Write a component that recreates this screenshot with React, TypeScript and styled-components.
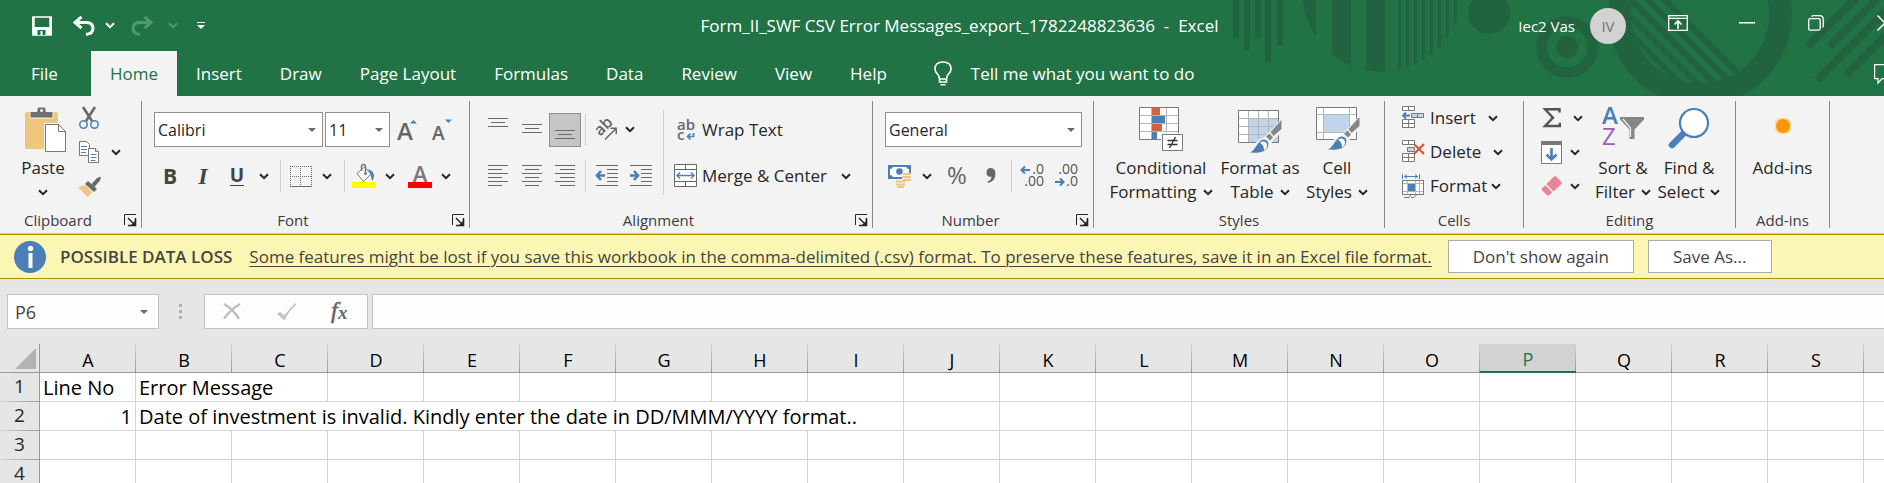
import React from 'react';
import styled, { createGlobalStyle, css } from 'styled-components';

const GREEN = '#217346';
const DECOR = '#22633f';
const BLUE = '#4a7fb8';
const GREY = '#797979';
const TAN = '#eec67d';

const GlobalStyle = createGlobalStyle`
  * { box-sizing: border-box; }
  body {
    margin: 0;
    overflow: hidden;
    background: #e6e6e6;
    font-family: "Open Sans", "Noto Sans", sans-serif;
    font-size: 17px;
    line-height: 24px;
    color: #262626;
  }
  button, select, input {
    font: inherit;
    color: inherit;
    margin: 0;
    padding: 0;
    border: 0;
    background: none;
    border-radius: 0;
  }
  svg { display: block; flex: none; overflow: visible; }
`;

/* ---------- frame ---------- */

const Window = styled.div`
  display: flex;
  flex-direction: column;
  height: 100vh;
  overflow: hidden;
`;

const Header = styled.header`
  position: relative;
  flex: none;
  margin-right: -35px;
  background: ${GREEN};
  color: #fff;
`;

const Decoration = styled.svg`
  position: absolute;
  top: 0;
  right: 0;
  overflow: hidden;
`;

const TitleBar = styled.div`
  position: relative;
  display: grid;
  grid-template-columns: 1fr auto 1fr;
  align-items: center;
  height: 51px;
`;

const QuickAccess = styled.div`
  display: flex;
  align-items: center;
  padding-left: 24px;
`;

const Title = styled.h1`
  margin: 0;
  font-size: 17px;
  font-weight: 400;
  line-height: 24px;
  white-space: pre;
`;

const WindowTools = styled.div`
  display: flex;
  align-self: stretch;
  align-items: center;
  justify-content: flex-end;
  > button { align-self: flex-start; }
`;

const UserName = styled.span`
  font-size: 15px;
`;

const Avatar = styled.span`
  width: 36px;
  margin: 0 17px 0 15px;
  border-radius: 50%;
  background: #d2d2d2;
  color: #6b7480;
  font-size: 15px;
  line-height: 36px;
  text-align: center;
`;

const ToolButton = styled.button<{ $w: number; $h?: number }>`
  display: flex;
  align-items: center;
  justify-content: center;
  flex: none;
  width: ${p => p.$w}px;
  height: ${p => p.$h ?? 32}px;
`;

const Tabs = styled.nav`
  position: relative;
  display: flex;
  height: 45px;
  padding-left: 12px;
`;

const Tab = styled.button<{ $active?: boolean }>`
  padding: 0 19px;
  ${p => p.$active && css`
    margin-left: 14px;
    background: #f3f3f3;
    color: ${GREEN};
  `}
`;

const TellMe = styled.button`
  display: flex;
  align-items: center;
  gap: 19px;
  margin-left: 28px;
`;

const CommentButton = styled.button`
  margin-left: auto;
  padding-right: 23px;
`;

/* ---------- ribbon ---------- */

const Ribbon = styled.div`
  display: flex;
  flex: none;
  height: 138px;
  padding: 5px 0;
  background: #f3f3f3;
  border-bottom: 1px solid #c6c6c6;
`;

const Group = styled.section<{ $w: number }>`
  display: flex;
  flex-direction: column;
  justify-content: space-between;
  flex: none;
  width: ${p => p.$w}px;
  border-right: 1px solid #8a8a8a;
`;

const GroupBody = styled.div<{ $left: number }>`
  display: flex;
  padding-left: ${p => p.$left}px;
`;

const GroupFooter = styled.div`
  display: flex;
  align-items: center;
  height: 16px;
  color: #3b3b3b;
`;

const GroupName = styled.span`
  flex: 1;
  font-size: 15px;
  text-align: center;
`;

const Launcher = styled.button`
  padding: 0 5px 0 8px;
`;

const Rows = styled.div`
  display: flex;
  flex-direction: column;
`;

const TwoRows = styled(Rows)`
  gap: 13px;
  padding-top: 11px;
`;

const Row = styled.div<{ $h: number; $gap?: number }>`
  display: flex;
  align-items: center;
  height: ${p => p.$h}px;
  gap: ${p => p.$gap ?? 0}px;
`;

const Separator = styled.span<{ $w?: number }>`
  flex: none;
  width: ${p => p.$w ?? 12}px;
  height: 32px;
  background: linear-gradient(#cfcfcf, #cfcfcf) center / 1px 100% no-repeat;
`;

const TallSeparator = styled.span`
  flex: none;
  width: 1px;
  height: 85px;
  margin: 9px 9px 0 6px;
  background: #cfcfcf;
`;

const Combo = styled.label<{ $w: number }>`
  display: grid;
  align-items: center;
  width: ${p => p.$w}px;
  height: 35px;
  background: #fff;
  border: 1px solid #8f8f8f;
  > * { grid-area: 1 / 1; }
  > svg { justify-self: end; margin-right: 6px; pointer-events: none; }
`;

const ComboSelect = styled.select`
  appearance: none;
  width: 100%;
  height: 33px;
  padding-left: 3px;
  font-size: 16px;
  outline: none;
`;

const BigButton = styled.button<{ $w: number }>`
  display: flex;
  flex-direction: column;
  align-items: center;
  flex: none;
  width: ${p => p.$w}px;
  white-space: nowrap;
`;

const BigIcon = styled.span`
  display: flex;
  height: 55px;
`;

const BigLine = styled.span`
  display: flex;
  align-items: center;
  gap: 6px;
  height: 24px;
`;

const LabelButton = styled.button<{ $chevronGap?: number }>`
  display: flex;
  align-items: center;
  height: 32px;
  white-space: nowrap;
  > span { margin: 0 ${p => p.$chevronGap ?? 0}px 0 5px; }
`;

const PressedButton = styled(ToolButton)`
  background: #c5c5c5;
  border: 1px solid #8f8f8f;
`;

const Glyph = styled.span<{ $kind: 'bold' | 'italic' | 'underline' }>`
  color: #444;
  font-size: 21px;
  font-weight: 700;
  ${p => p.$kind === 'italic' && css`
    font-family: "Liberation Serif", serif;
    font-size: 24px;
    font-style: italic;
  `}
  ${p => p.$kind === 'underline' && css`
    font-size: 19px;
    line-height: 19px;
    border-bottom: 1px solid #444;
  `}
`;

/* ---------- message bar ---------- */

const MessageBar = styled.div`
  display: flex;
  align-items: center;
  flex: none;
  height: 45px;
  padding-left: 14px;
  background: #fcf6b5;
  border-top: 1px solid #b38a06;
  border-bottom: 1px solid #b38a06;
  color: #444;
  white-space: nowrap;
`;

const MessageTitle = styled.strong`
  margin: 0 17px 0 14px;
  font-weight: 600;
`;

const MessageLink = styled.a`
  color: inherit;
  text-decoration: underline;
  text-underline-offset: 3px;
  text-decoration-thickness: 1px;
`;

const MessageButton = styled.button`
  height: 33px;
  margin-left: 14px;
  padding: 0 24px;
  background: #fff;
  border: 1px solid #ababab;
  ${MessageLink} + & { margin-left: 16px; }
`;

/* ---------- formula bar ---------- */

const FormulaBar = styled.div`
  display: flex;
  flex: none;
  height: 65px;
  padding: 15px 0 15px 7px;
`;

const NameBox = styled.label`
  display: flex;
  align-items: center;
  width: 152px;
  padding: 0 10px 0 7px;
  background: #fdfdfd;
  border: 1px solid #c3c3c3;
`;

const NameInput = styled.input`
  flex: 1;
  min-width: 0;
  font-size: 18px;
  color: #444;
  outline: none;
`;

const Grip = styled.span`
  display: flex;
  flex-direction: column;
  justify-content: center;
  gap: 3px;
  width: 45px;
  padding-left: 20px;
  > i { width: 3px; height: 3px; background: #b0b0b0; }
`;

const FormulaTools = styled.div`
  display: flex;
  align-items: center;
  width: 164px;
  margin-right: 4px;
  padding-left: 3px;
  background: #fdfdfd;
  border: 1px solid #c3c3c3;
`;

const FormulaInput = styled.input`
  flex: 1;
  min-width: 0;
  padding: 0 8px;
  background: #fdfdfd;
  border: 1px solid #c3c3c3;
  border-right: 0;
  outline: none;
`;

/* ---------- sheet ---------- */

const SheetArea = styled.main`
  flex: 1;
  min-height: 0;
  overflow: hidden;
`;

const Sheet = styled.table`
  table-layout: fixed;
  width: 1960px;
  border-collapse: separate;
  border-spacing: 0;
  color: #000;
`;

const SelectAll = styled.th`
  height: 29px;
  padding: 0 3px 3px 0;
  border-right: 1px solid #999;
  border-bottom: 1px solid #999;
  vertical-align: bottom;
  > svg { margin-left: auto; }
`;

const ColumnHead = styled.th<{ $selected?: boolean }>`
  height: 29px;
  padding: 3px 0 0;
  border-bottom: 1px solid #999;
  background: linear-gradient(#d4d4d4, #999) right / 1px 100% no-repeat #e6e6e6;
  font-size: 18px;
  font-weight: 400;
  line-height: 24px;
  ${p => p.$selected && css`
    border-bottom: 2px solid ${GREEN};
    background-color: #d2d2d2;
    color: ${GREEN};
  `}
`;

const RowHead = styled.th`
  height: 29px;
  padding: 0 0 2px;
  border-right: 1px solid #999;
  background: linear-gradient(90deg, #d4d4d4, #999) bottom / 100% 1px no-repeat #e6e6e6;
  font-size: 19px;
  font-weight: 400;
  line-height: 27px;
  color: #262626;
`;

const Cell = styled.td<{ $right?: boolean }>`
  height: 29px;
  padding: 2px 3px 0;
  background: #fff;
  border-right: 1px solid #d4d4d4;
  border-bottom: 1px solid #d4d4d4;
  font-size: 20px;
  line-height: 26px;
  text-align: ${p => (p.$right ? 'right' : 'left')};
  white-space: nowrap;
`;

/* ---------- icons ---------- */

const Chevron = ({ color = '#262626' }: { color?: string }) => (
  <svg width="10" height="7" viewBox="0 0 10 7" fill="none" stroke={color} strokeWidth="2">
    <path d="M1 1.2 5 5.2 9 1.2" />
  </svg>
);

const Caret = () => (
  <svg width="8" height="4" viewBox="0 0 8 4" fill="#6a6a6a"><path d="M0 0h8L4 4z" /></svg>
);

const LauncherIcon = () => (
  <svg width="12" height="12" viewBox="0 0 12 12" fill="none" stroke="#262626">
    <path d="M.5 11V.5H12" />
    <path d="M4 4l6 6" strokeWidth="1.5" />
    <path d="M11.5 4v7.5H4" strokeWidth="1.6" />
    <path d="M6.500 11.500h5v-5z" fill="#262626" stroke="none" />
  </svg>
);

const lines = (rows: [number, number, number][]) => rows.map(([x1, x2, y]) => `M${x1} ${y}.5H${x2}`).join('');
const LinesIcon = ({ rows, h }: { rows: [number, number, number][]; h: number }) => (
  <svg width="20" height={h} viewBox={`0 0 20 ${h}`} stroke="#6a6a6a" fill="none"><path d={lines(rows)} /></svg>
);

const IndentIcon = ({ right }: { right?: boolean }) => (
  <svg width="22" height="22" viewBox="0 0 22 22" fill="none">
    <path d={lines([[0, 22, 0], [11, 22, 4], [11, 22, 8], [11, 22, 12], [11, 22, 16], [0, 22, 20]])} stroke="#6a6a6a" />
    <g transform={right ? 'matrix(-1 0 0 1 9 0)' : undefined}>
      <path d="M0 10.500h9M5 6l-4 4.500 4 4.500" stroke={BLUE} strokeWidth="2.600" />
    </g>
  </svg>
);

const Brush = ({ x, y }: { x: number; y: number }) => (
  <g transform={`translate(${x} ${y})`}>
    <path d="M33 1 34 9 24 19 21 23 17 22 11 31 0 33 11 21 16 19Z" fill="#f3f3f3" stroke="#f3f3f3" strokeWidth="3" />
    <path d="M33 0V9L25 16 22 12z" fill="#868686" />
    <path d="M21 13.500l3.500 4-3 3-4-4z" fill="#868686" />
    <path d="M10 23c3-5 8-4 9.500-1 1.500 5-2 10-9.500 10.500-4 .5-6 0-9 0 5-2 6-6 9-9.500z" fill={BLUE} />
    <path d="M11.500 22.500c3-2 7-1 7 3 0 2-1 4-3 5 0-4-1-5.500-4-8z" fill="#fff" />
  </g>
);

const PasteIcon = () => (
  <svg width="42" height="46" viewBox="0 0 42 46">
    <rect x="0" y="5" width="33" height="37" rx="2" fill={TAN} />
    <path d="M5 4.500h7V2q0-2 2-2h5q2 0 2 2v2.500h7V11H5z" fill="#6f6f6f" stroke="#f3f3f3" />
    <circle cx="16.500" cy="3.500" r="1.500" fill="#f3f3f3" />
    <path d="M19 16h16l7 8v22H19z" fill="#f3f3f3" />
    <path d="M20.500 17.500h13l7 7v20h-20z" fill="#fff" stroke="#797979" />
    <path d="M33.500 17.500v7h7" fill="none" stroke="#797979" />
  </svg>
);

const CutIcon = () => (
  <svg width="20" height="22" viewBox="0 0 20 22" fill="none">
    <path d="M4 0l9 14M16 0L7 14" stroke="#6a6a6a" strokeWidth="2.600" />
    <circle cx="4.500" cy="17.500" r="3.700" stroke={BLUE} strokeWidth="1.500" />
    <circle cx="15.500" cy="17.500" r="3.700" stroke={BLUE} strokeWidth="1.500" />
  </svg>
);

const CopyIcon = () => (
  <svg width="20" height="22" viewBox="0 0 20 22" fill="#fff" stroke="#797979">
    <path d="M.5.5h7l3 3v11H.5z" />
    <path d="M2 5.500h6M2 8.500h6M2 11.500h5" stroke={BLUE} />
    <path d="M9.500 7.500h7l3 3v11h-10z" />
    <path d="M16.500 7.500v3h3" />
    <path d="M11.500 13.500h6M11.500 16.500h6M11.500 19.500h5" stroke={BLUE} />
  </svg>
);

const FormatPainterIcon = () => (
  <svg width="23" height="21" viewBox="0 0 23 21">
    <path d="M0 11l7-2 7.500 7L9.500 21z" fill={TAN} />
    <path d="M10 5l9 8-3 3-9-8z" fill="#6a6a6a" />
    <path d="M13.500 8L19 2l4-1.500-1 4L16.500 11z" fill="#6a6a6a" />
  </svg>
);

const GrowIcon = ({ shrink }: { shrink?: boolean }) => (
  <svg width="22" height="24" viewBox="0 0 22 24">
    <text x="0" y="22" fontSize={shrink ? 19 : 24} fontWeight="600" fill="#666">A</text>
    {shrink ? <path d="M13 1.500h7L16.500 5z" fill={BLUE} /> : <path d="M13 5.500h7L16.500 2z" fill={BLUE} />}
  </svg>
);

const BordersIcon = () => (
  <svg width="22" height="21" viewBox="0 0 22 21" fill="none" stroke="#6a6a6a">
    <path d="M0 .5h22M0 10.500h22M.5 0v20M10.500 0v20M21.500 0v20" strokeDasharray="1 1" />
    <path d="M0 20.500h22" />
  </svg>
);

const FillIcon = () => (
  <svg width="24" height="24" viewBox="0 0 24 24">
    <path d="M5 9.500L12.500 3 19 10l-7.500 7.500z" fill="#fff" stroke="#797979" />
    <path d="M9.500 7V2.500q0-2 2-2t2 2V9" fill="none" stroke="#797979" strokeWidth="1.500" />
    <circle cx="13.500" cy="9.500" r="1.500" fill="#797979" />
    <path d="M16 5q6 2 6 7 0 3-2 5-1-7-4-12z" fill={BLUE} />
    <rect y="18" width="24" height="6" fill="#ff0" />
  </svg>
);

const FontColorIcon = () => (
  <svg width="24" height="24" viewBox="0 0 24 24">
    <text x="12" y="18" textAnchor="middle" fontSize="22" fontWeight="600" fill="#797979">A</text>
    <rect y="18" width="24" height="6" fill="#f00" />
  </svg>
);

const OrientationIcon = () => (
  <svg width="22" height="22" viewBox="0 0 22 22" fill="none" stroke="#666" strokeWidth="1.500">
    <text x="4" y="17" transform="rotate(-45 5 17)" fontSize="16" fill="#666" stroke="none" fontWeight="600">ab</text>
    <path d="M9 20.500L20 9.500M14.500 9.200h5.700v5.700" />
  </svg>
);

const WrapIcon = () => (
  <svg width="24" height="26" viewBox="0 0 24 26">
    <text x="4" y="13" fontSize="15" fontWeight="600" fill="#6a6a6a">ab</text>
    <text x="4" y="23" fontSize="15" fontWeight="600" fill="#6a6a6a">c</text>
    <path d="M20.500 16v3.500H15M17.500 16.500L14.500 19.500l3 3" fill="none" stroke={BLUE} strokeWidth="1.700" />
  </svg>
);

const MergeIcon = () => (
  <svg width="24" height="24" viewBox="0 0 24 24">
    <path d="M1.500.5h22v22h-22z" fill="#fff" stroke="#666" />
    <path d="M1.500 5.500h22M1.500 17.500h22M12.500.5v5M12.500 17.500v5" stroke="#666" />
    <path d="M4 11.500h17M7 8.500l-3 3 3 3M18 8.500l3 3-3 3" fill="none" stroke={BLUE} strokeWidth="1.400" />
  </svg>
);

const MoneyIcon = () => (
  <svg width="24" height="24" viewBox="0 0 24 24">
    <rect x="0" y="1" width="23" height="14" fill={BLUE} />
    <path d="M2 5q2 0 3-2h13q1 2 3 2v6q-2 0-3 2H5q-1-2-3-2z" fill="#fff" />
    <circle cx="11.500" cy="7.500" r="3.300" fill={BLUE} />
    <path d="M14 9h10v15H7v-8h7z" fill="#f3f3f3" />
    <g fill="none" stroke={TAN} strokeWidth="2">
      <path d="M15 10h8M14 13h9M15 16h8M8 17.500h9M8 20.500h9M9 23h7" />
    </g>
  </svg>
);

const CommaIcon = () => (
  <svg width="10" height="16" viewBox="0 0 10 16" fill="#666">
    <path d="M4.500 0Q9.500 0 9.500 6 9.500 13 2 15L1.500 13.500Q5.500 12 5.500 8.500 1 9.500.5 5 .5 0 4.500 0z" />
  </svg>
);

const DecimalIcon = ({ increase }: { increase?: boolean }) => (
  <svg width="24" height="26" viewBox="0 0 24 26" fontSize="14" fill="#555">
    <text x="24" y="11" textAnchor="end">{increase ? '.0' : '.00'}</text>
    <text x="24" y="23" textAnchor="end">{increase ? '.00' : '.0'}</text>
    {increase
      ? <path d="M1.500 7H10M5 3.500L1.500 7 5 10.500" fill="none" stroke={BLUE} strokeWidth="2" />
      : <path d="M1 19H9M6 15.500l3.500 3.500L6 22.500" fill="none" stroke={BLUE} strokeWidth="2" />}
  </svg>
);

const ConditionalIcon = () => (
  <svg width="50" height="51" viewBox="-3 -6 50 51">
    <path d="M.5.5h39v32H.5z" fill="#fff" />
    <path d="M12.500 0v33M27.500 0v33M0 8.500h40M0 16.500h40M0 24.500h40" stroke="#b5b5b5" />
    <path d="M.5.5h39v32H.5z" fill="none" stroke={GREY} />
    <path d="M13 1h8v7h-8zM13 17h10v7H13z" fill="#d9603f" />
    <path d="M13 9h13v7H13zM13 25h5v7h-5z" fill={BLUE} />
    <path d="M22 26h24v19H22z" fill="#f3f3f3" />
    <path d="M23.500 27.500h20v16h-20z" fill="#fff" stroke={GREY} />
    <path d="M28.500 33.500h10M28.500 37.500h10M36.500 30l-6 11" stroke="#333" strokeWidth="1.300" />
  </svg>
);

const FormatTableIcon = () => (
  <svg width="50" height="52" viewBox="-3 -9 50 52">
    <path d="M.5.5h40v32H.5z" fill="#fff" />
    <path d="M10 8h30v24H10z" fill="#c1d4ea" />
    <path d="M10.500 0v33M20.500 0v33M30.500 0v33M0 8.500h40M0 16.500h40M0 24.500h40" stroke="#b5b5b5" />
    <path d="M.5.5h40v32H.5z" fill="none" stroke={GREY} />
    <Brush x={10.500} y={10} />
  </svg>
);

const CellStylesIcon = () => (
  <svg width="50" height="52" viewBox="-4 -6 50 52">
    <path d="M.5.5h40v32H.5z" fill="#fff" />
    <path d="M8 8h25v17H8z" fill="#c1d4ea" />
    <path d="M7.500 0v33M33.500 0v33M0 7.500h40M0 25.500h40" stroke="#b5b5b5" />
    <path d="M.5.5h40v32H.5z" fill="none" stroke={GREY} />
    <Brush x={10.500} y={10} />
  </svg>
);

const CellsIcon = ({ kind }: { kind: 'insert' | 'delete' | 'format' }) => (
  <svg width="24" height="24" viewBox="0 0 24 24" fill="#fff" stroke={GREY}>
    {kind !== 'format' && <>
      <path d="M1.500.5h12v4h-12zM7.500.5v4M1.500 13.500h12v8h-12zM7.500 13.500v8M1.500 17.500h12" />
    </>}
    {kind === 'insert' && <>
      <path d="M10.500 7.500h12v4h-12zM16.500 7.500v4" fill="#c1d4ea" />
      <path d="M2 9.500h7M5 6.500l-3 3 3 3" fill="none" stroke={BLUE} strokeWidth="1.800" />
    </>}
    {kind === 'delete' && <>
      <path d="M6.500 7.500h7v4h-7z" fill="#c1d4ea" />
      <path d="M13 4l10 10M23 4L13 14" stroke="#d9532f" strokeWidth="2" />
    </>}
    {kind === 'format' && <>
      <path d="M1.500 0v5M18.500 0v5M3 2.500h14M6 .5l-2.500 2L6 4.500M14 .5l2.500 2-2.500 2" fill="none" stroke={BLUE} />
      <path d="M1.500 6.500h21v14h-21z" />
      <path d="M6.500 6.500v14M14.500 6.500v14M18.500 6.500v14M1.500 9.500h21M1.500 17.500h21" stroke="#b5b5b5" />
      <path d="M7 10h7v7H7z" fill={BLUE} stroke="none" />
      <path d="M1.500 6.500h21v14h-21z" fill="none" />
      <path d="M3 23.500h5l2-3M10 23.500h3l3-3" fill="none" />
    </>}
  </svg>
);

const SigmaIcon = () => (
  <svg width="18" height="20" viewBox="0 0 18 20" fill="none" stroke="#555" strokeWidth="2.400">
    <path d="M16.500 4.500V1.300H2L10 9.700 2 18H16.800V14.800" />
  </svg>
);

const FillDownIcon = () => (
  <svg width="22" height="23" viewBox="0 0 22 23">
    <path d="M.5.5h20v22H.5z" fill="#fff" stroke={GREY} />
    <path d="M0 0h21v4H0z" fill={GREY} />
    <path d="M10.500 7v11M5.500 13.500l5 5 5-5" fill="none" stroke={BLUE} strokeWidth="2.600" />
  </svg>
);

const EraserIcon = () => (
  <svg width="22" height="22" viewBox="0 0 22 22" fill="#e8849a">
    <path d="M13 1.500q1-1 2 0l5.500 5.500q1 1 0 2L12.500 16.500 5.500 9z" />
    <path d="M4.500 10.300l6.700 7-3 3q-1 .8-2 0L1 15.200q-.8-1 0-2z" />
  </svg>
);

const SortFilterIcon = () => (
  <svg width="44" height="48" viewBox="0 0 44 48" fontSize="24" fontWeight="600">
    <text x="1" y="23" fill={BLUE}>A</text>
    <text x="1" y="44" fill="#9a5fb8" fontWeight="400">Z</text>
    <path d="M19 16h24v2.500l-9.500 10V38h-5v-9.500L19 18.500z" fill="#868686" />
    <path d="M22 18l7.500 9V36" fill="none" stroke="#f3f3f3" strokeWidth="1.200" />
  </svg>
);

const FindIcon = () => (
  <svg width="42" height="48" viewBox="0 0 42 48">
    <path d="M15 33L4 44" stroke={BLUE} strokeWidth="6.500" strokeLinecap="round" />
    <circle cx="26" cy="22" r="14" fill="#fff" stroke={BLUE} strokeWidth="2.200" />
  </svg>
);

const AddInsIcon = () => (
  <svg width="22" height="50" viewBox="0 0 22 50">
    <rect x="3" y="17" width="16" height="16" rx="5" fill="#ffc878" opacity=".6" />
    <circle cx="11" cy="25" r="7" fill="#ff9500" />
  </svg>
);

const SaveIcon = () => (
  <svg width="20" height="20" viewBox="0 0 20 20" fill="none" stroke="#fff">
    <path d="M1 1h18v18H1z" strokeWidth="1.600" />
    <path d="M1 11.500h18v7H1z" fill="#fff" />
    <path d="M5.500 14h8v5h-3v-4h-2v4h-3z" fill={GREEN} stroke="none" />
    <path d="M1.500 1v11M18.500 1v11" strokeWidth="2.400" />
  </svg>
);

const UndoIcon = ({ redo }: { redo?: boolean }) => (
  <svg width="22" height="20" viewBox="0 0 22 20" fill="none" stroke={redo ? '#4f9a6c' : '#fff'} strokeWidth="3">
    <g transform={redo ? 'matrix(-1 0 0 1 22 0)' : undefined}>
      <path d="M2 6.500h11.500q6.500 0 6.500 6 0 5-7 6" />
      <path d="M8.500 0.800L2 6.500l6.500 5.700" />
    </g>
  </svg>
);

const CustomizeIcon = () => (
  <svg width="8" height="8" viewBox="0 0 8 8" fill="#fff"><path d="M0 0h8v1H0zM0 3h8L4 7z" /></svg>
);

const RibbonOptionsIcon = () => (
  <svg width="20" height="16" viewBox="0 0 20 16" fill="none" stroke="#fff" strokeWidth="1.300">
    <path d="M.7.7h18.600v14.600H.7zM.7 3.300h18.600" />
    <path d="M10 14V6M6.500 9.500L10 6l3.500 3.500" strokeWidth="1.600" />
  </svg>
);

const RestoreIcon = () => (
  <svg width="16" height="16" viewBox="0 0 16 16" fill="none" stroke="#fff" strokeWidth="1.300">
    <rect x=".7" y="3.700" width="11.500" height="11.500" rx="1.500" />
    <path d="M3.500 1.500q.8-.8 2-.8h6q3.800 0 3.800 3.800v6q0 1.200-.8 2" />
  </svg>
);

const BulbIcon = () => (
  <svg width="18" height="25" viewBox="0 0 18 25" fill="none" stroke="#fff" strokeWidth="1.600">
    <path d="M5.500 18q0-3-2.200-5.200-2.300-2-2.300-4.800 0-7 8-7t8 7q0 2.800-2.300 4.800Q12.500 15 12.500 18zM5.500 18v3h7v-3M6.500 23.800h5" />
  </svg>
);

const InfoIcon = () => (
  <svg width="32" height="32" viewBox="0 0 32 32">
    <circle cx="16" cy="16" r="16" fill={BLUE} />
    <circle cx="16.500" cy="7.500" r="2.700" fill="#fff" />
    <path d="M14.500 12h4v15h-4z" fill="#fff" />
  </svg>
);

const TitleDecoration = () => (
  <Decoration width="720" height="96" viewBox="1199 0 720 96" fill={DECOR} aria-hidden>
    <clipPath id="disc"><circle cx="1382" cy="-8" r="79.700" /></clipPath>
    <clipPath id="ring"><circle cx="1700" cy="14" r="70" /></clipPath>
    <path d="M1233 0h6v39h-6zM1244 0h6v50h-6zM1255 0h6v39h-6zM1265 0h6v63h-6zM1277 0h6v46h-6z" />
    <path clipPath="url(#disc)" d="M1296 0h20v80h-20zM1332 0h19v80h-19zM1366 0h19v80h-19zM1398 0h3v80h-3zM1406 0h3v80h-3zM1414 0h3v80h-3zM1422 0h3v80h-3zM1430 0h3v80h-3zM1438 0h3v80h-3zM1446 0h3v80h-3zM1454 0h3v80h-3z" />
    <circle cx="1489" cy="13" r="21" />
    <circle cx="1567" cy="47" r="11" />
    <g fill="none" stroke={DECOR}>
      <circle cx="1567" cy="47" r="25.500" strokeWidth="10.500" />
      <circle cx="1700" cy="14" r="80.500" strokeWidth="23" />
      <g strokeWidth="6" clipPath="url(#ring)">
        <path d="M1655-10l100 100M1638-10l100 100M1621-10l100 100M1604-10l100 100M1587-10l100 100" />
      </g>
      <path strokeWidth="8" d="M1808 46l50-50M1830 46l50-50M1817 80l90-90M1846 75l80-80" />
    </g>
  </Decoration>
);

const Split = ({ w, h }: { w: number; h?: number }) => (
  <ToolButton $w={w} $h={h} aria-label="More options"><Chevron /></ToolButton>
);

const Footer = ({ name, launcher }: { name: string; launcher?: boolean }) => (
  <GroupFooter>
    <GroupName>{name}</GroupName>
    {launcher && <Launcher aria-label={`${name} settings`}><LauncherIcon /></Launcher>}
  </GroupFooter>
);

const Dropdown = ({ label, value, w }: { label: string; value: string; w: number }) => (
  <Combo $w={w}>
    <ComboSelect aria-label={label} defaultValue={value}><option>{value}</option></ComboSelect>
    <Caret />
  </Combo>
);

const Big = ({ w, icon, top, bottom }: { w: number; icon: React.ReactNode; top: string; bottom?: string }) => (
  <BigButton $w={w}>
    <BigIcon>{icon}</BigIcon>
    <BigLine>{top}</BigLine>
    {bottom !== undefined && <BigLine>{bottom}<Chevron /></BigLine>}
  </BigButton>
);

/* ---------- page ---------- */

const tabs = ['File', 'Home', 'Insert', 'Draw', 'Page Layout', 'Formulas', 'Data', 'Review', 'View', 'Help'];
const columns = 'ABCDEFGHIJKLMNOPQRST'.split('');

type CellData = { text: string; span?: number; right?: boolean };
const rows: CellData[][] = [
  [{ text: 'Line No' }, { text: 'Error Message', span: 2 }],
  [{ text: '1', right: true }, { text: 'Date of investment is invalid. Kindly enter the date in DD/MMM/YYYY format..', span: 8 }],
  [],
  [],
];

const SheetRow = ({ number, cells }: { number: number; cells: CellData[] }) => {
  const used = cells.reduce((sum, c) => sum + (c.span ?? 1), 0);
  return (
    <tr>
      <RowHead scope="row">{number}</RowHead>
      {cells.map(c => <Cell key={c.text} colSpan={c.span} $right={c.right}>{c.text}</Cell>)}
      {columns.slice(used).map(c => <Cell key={c} />)}
    </tr>
  );
};

export default function App() {
  return (
    <Window>
      <GlobalStyle />
      <Header>
        <TitleDecoration />
        <TitleBar>
          <QuickAccess>
            <ToolButton $w={36} aria-label="Save"><SaveIcon /></ToolButton>
            <ToolButton $w={48} aria-label="Undo"><UndoIcon /></ToolButton>
            <ToolButton $w={4} aria-label="Undo list"><Chevron color="#fff" /></ToolButton>
            <ToolButton $w={60} aria-label="Redo"><UndoIcon redo /></ToolButton>
            <ToolButton $w={1} aria-label="Redo list"><Chevron color="#4f9a6c" /></ToolButton>
            <ToolButton $w={56} aria-label="Customize toolbar"><CustomizeIcon /></ToolButton>
          </QuickAccess>
          <Title>{'Form_II_SWF CSV Error Messages_export_1782248823636  -  Excel'}</Title>
          <WindowTools>
            <UserName>Iec2 Vas</UserName>
            <Avatar>IV</Avatar>
            <ToolButton $w={69} $h={46} aria-label="Ribbon display options"><RibbonOptionsIcon /></ToolButton>
            <ToolButton $w={69} $h={46} aria-label="Minimize">
              <svg width="16" height="2" viewBox="0 0 16 2"><path d="M0 0h16v1.500H0z" fill="#fff" /></svg>
            </ToolButton>
            <ToolButton $w={69} $h={46} aria-label="Restore"><RestoreIcon /></ToolButton>
            <ToolButton $w={69} $h={46} aria-label="Close">
              <svg width="16" height="16" viewBox="0 0 16 16" stroke="#fff" strokeWidth="1.500"><path d="M.5.5l15 15M15.500.5l-15 15" /></svg>
            </ToolButton>
          </WindowTools>
        </TitleBar>
        <Tabs>
          {tabs.map(t => <Tab key={t} $active={t === 'Home'}>{t}</Tab>)}
          <TellMe><BulbIcon />Tell me what you want to do</TellMe>
          <CommentButton aria-label="Comments">
            <svg width="22" height="20" viewBox="0 0 22 20" fill="none" stroke="#fff"><path d="M.6.6h20.800v14H8l-4 4.500v-4.500H.6z" strokeWidth="1.200" /></svg>
          </CommentButton>
        </Tabs>
      </Header>

      <Ribbon>
        <Group $w={142}>
          <GroupBody $left={14}>
            <BigButton $w={58}>
              <BigIcon><svg width="50" height="52" viewBox="-7 -6 50 52"><PasteIcon /></svg></BigIcon>
              <BigLine>Paste</BigLine>
              <BigLine><Chevron /></BigLine>
            </BigButton>
            <Rows>
              <Row $h={34}><ToolButton $w={34} aria-label="Cut"><CutIcon /></ToolButton></Row>
              <Row $h={34}>
                <ToolButton $w={34} aria-label="Copy"><CopyIcon /></ToolButton>
                <Split w={20} />
              </Row>
              <Row $h={34}><ToolButton $w={34} aria-label="Format Painter"><FormatPainterIcon /></ToolButton></Row>
            </Rows>
          </GroupBody>
          <Footer name="Clipboard" launcher />
        </Group>

        <Group $w={328}>
          <GroupBody $left={12}>
            <TwoRows>
              <Row $h={35} $gap={2}>
                <Dropdown label="Font" value="Calibri" w={169} />
                <Dropdown label="Font size" value="11" w={65} />
                <ToolButton $w={32} aria-label="Increase font size"><GrowIcon /></ToolButton>
                <ToolButton $w={34} aria-label="Decrease font size"><GrowIcon shrink /></ToolButton>
              </Row>
              <Row $h={32}>
                <ToolButton $w={32} aria-label="Bold"><Glyph $kind="bold">B</Glyph></ToolButton>
                <ToolButton $w={34} aria-label="Italic"><Glyph $kind="italic">I</Glyph></ToolButton>
                <ToolButton $w={34} aria-label="Underline"><Glyph $kind="underline">U</Glyph></ToolButton>
                <Split w={20} />
                <Separator />
                <ToolButton $w={30} aria-label="Borders"><BordersIcon /></ToolButton>
                <Split w={22} />
                <Separator />
                <ToolButton $w={28} aria-label="Fill color"><FillIcon /></ToolButton>
                <Split w={24} />
                <ToolButton $w={36} aria-label="Font color"><FontColorIcon /></ToolButton>
                <Split w={16} />
              </Row>
            </TwoRows>
          </GroupBody>
          <Footer name="Font" launcher />
        </Group>

        <Group $w={403}>
          <GroupBody $left={11}>
            <TwoRows>
              <Row $h={35}>
                <ToolButton $w={34} aria-label="Top align"><LinesIcon h={24} rows={[[0, 20, 0], [3, 17, 4], [0, 20, 8]]} /></ToolButton>
                <ToolButton $w={34} aria-label="Middle align"><LinesIcon h={24} rows={[[0, 20, 6], [3, 17, 10], [0, 20, 14]]} /></ToolButton>
                <PressedButton $w={32} $h={34} aria-label="Bottom align"><LinesIcon h={24} rows={[[0, 20, 12], [3, 17, 16], [0, 20, 20]]} /></PressedButton>
                <Separator $w={8} />
                <ToolButton $w={36} aria-label="Orientation"><OrientationIcon /></ToolButton>
                <Split w={10} />
              </Row>
              <Row $h={32}>
                <ToolButton $w={34} aria-label="Align left"><LinesIcon h={22} rows={[[0, 20, 0], [0, 14, 4], [0, 20, 8], [0, 14, 12], [0, 20, 16], [0, 14, 20]]} /></ToolButton>
                <ToolButton $w={34} aria-label="Center"><LinesIcon h={22} rows={[[0, 20, 0], [3, 17, 4], [0, 20, 8], [3, 17, 12], [0, 20, 16], [3, 17, 20]]} /></ToolButton>
                <ToolButton $w={32} aria-label="Align right"><LinesIcon h={22} rows={[[0, 20, 0], [5, 20, 4], [0, 20, 8], [5, 20, 12], [0, 20, 16], [5, 20, 20]]} /></ToolButton>
                <Separator $w={8} />
                <ToolButton $w={36} aria-label="Decrease indent"><IndentIcon /></ToolButton>
                <ToolButton $w={32} aria-label="Increase indent"><IndentIcon right /></ToolButton>
              </Row>
            </TwoRows>
            <TallSeparator />
            <TwoRows>
              <Row $h={35}><LabelButton><WrapIcon /><span>Wrap Text</span></LabelButton></Row>
              <Row $h={32}><LabelButton $chevronGap={14}><MergeIcon /><span>Merge &amp; Center</span><Chevron /></LabelButton></Row>
            </TwoRows>
          </GroupBody>
          <Footer name="Alignment" launcher />
        </Group>

        <Group $w={221}>
          <GroupBody $left={12}>
            <TwoRows>
              <Row $h={35}><Dropdown label="Number format" value="General" w={197} /></Row>
              <Row $h={32}>
                <ToolButton $w={30} aria-label="Accounting format"><MoneyIcon /></ToolButton>
                <Split w={24} />
                <ToolButton $w={36} aria-label="Percent style">
                  <svg width="24" height="24" viewBox="0 0 24 24"><text x="12" y="20" textAnchor="middle" fontSize="24" fill="#666">%</text></svg>
                </ToolButton>
                <ToolButton $w={32} aria-label="Comma style"><CommaIcon /></ToolButton>
                <Separator $w={8} />
                <ToolButton $w={34} aria-label="Increase decimal"><DecimalIcon increase /></ToolButton>
                <ToolButton $w={34} aria-label="Decrease decimal"><DecimalIcon /></ToolButton>
              </Row>
            </TwoRows>
          </GroupBody>
          <Footer name="Number" launcher />
        </Group>

        <Group $w={291}>
          <GroupBody $left={10}>
            <Big w={114} icon={<ConditionalIcon />} top="Conditional" bottom="Formatting" />
            <Big w={84} icon={<FormatTableIcon />} top="Format as" bottom="Table" />
            <Big w={70} icon={<CellStylesIcon />} top="Cell" bottom="Styles" />
          </GroupBody>
          <Footer name="Styles" />
        </Group>

        <Group $w={139}>
          <GroupBody $left={16}>
            <Rows>
              <Row $h={34}><LabelButton $chevronGap={12}><CellsIcon kind="insert" /><span>Insert</span><Chevron /></LabelButton></Row>
              <Row $h={34}><LabelButton $chevronGap={12}><CellsIcon kind="delete" /><span>Delete</span><Chevron /></LabelButton></Row>
              <Row $h={34}><LabelButton $chevronGap={4}><CellsIcon kind="format" /><span>Format</span><Chevron /></LabelButton></Row>
            </Rows>
          </GroupBody>
          <Footer name="Cells" />
        </Group>

        <Group $w={212}>
          <GroupBody $left={14}>
            <Rows>
              <Row $h={34}><ToolButton $w={28} aria-label="AutoSum"><SigmaIcon /></ToolButton><Split w={24} /></Row>
              <Row $h={34}><ToolButton $w={28} aria-label="Fill"><FillDownIcon /></ToolButton><Split w={18} /></Row>
              <Row $h={34}><ToolButton $w={28} aria-label="Clear"><EraserIcon /></ToolButton><Split w={18} /></Row>
            </Rows>
            <Big w={66} icon={<SortFilterIcon />} top="Sort &amp;" bottom="Filter" />
            <Big w={66} icon={<FindIcon />} top="Find &amp;" bottom="Select" />
          </GroupBody>
          <Footer name="Editing" />
        </Group>

        <Group $w={94}>
          <GroupBody $left={0}>
            <Big w={93} icon={<AddInsIcon />} top="Add-ins" />
          </GroupBody>
          <Footer name="Add-ins" />
        </Group>
      </Ribbon>

      <MessageBar>
        <InfoIcon />
        <MessageTitle>POSSIBLE DATA LOSS</MessageTitle>
        <MessageLink href="#">
          Some features might be lost if you save this workbook in the comma-delimited (.csv) format. To preserve these features, save it in an Excel file format.
        </MessageLink>
        <MessageButton>Don't show again</MessageButton>
        <MessageButton>Save As...</MessageButton>
      </MessageBar>

      <FormulaBar>
        <NameBox>
          <NameInput aria-label="Name box" defaultValue="P6" />
          <Caret />
        </NameBox>
        <Grip><i /><i /><i /></Grip>
        <FormulaTools>
          <ToolButton $w={48} aria-label="Cancel">
            <svg width="18" height="17" viewBox="0 0 18 17" fill="none" stroke="#bdbdbd" strokeWidth="2.400"><path d="M1 1q9 5 15 15M17 1Q8 6 1 15.500" /></svg>
          </ToolButton>
          <ToolButton $w={62} aria-label="Enter">
            <svg width="20" height="18" viewBox="0 0 20 18" fill="#c4c4c4"><path d="M0 11l3-2.500 4 4L18 0l1.500 1.500Q11 9 7.500 17.500z" /></svg>
          </ToolButton>
          <ToolButton $w={42} aria-label="Insert function">
            <svg width="22" height="26" viewBox="0 0 22 26" fontFamily="Liberation Serif" fontStyle="italic" fontWeight="700" fill="#666">
              <text x="3" y="19" fontSize="24" fontWeight="400" stroke="#666" strokeWidth=".6">f</text><text x="10" y="20" fontSize="19">x</text>
            </svg>
          </ToolButton>
        </FormulaTools>
        <FormulaInput aria-label="Formula" />
      </FormulaBar>

      <SheetArea>
        <Sheet>
          <colgroup>
            <col style={{ width: 40 }} />
            {columns.map(c => <col key={c} />)}
          </colgroup>
          <thead>
            <tr>
              <SelectAll aria-label="Select all">
                <svg width="21" height="21" viewBox="0 0 21 21" fill="#b3b3b3"><path d="M21 0v21H0z" /></svg>
              </SelectAll>
              {columns.map(c => <ColumnHead key={c} scope="col" $selected={c === 'P'}>{c}</ColumnHead>)}
            </tr>
          </thead>
          <tbody>
            {rows.map((cells, i) => <SheetRow key={i} number={i + 1} cells={cells} />)}
          </tbody>
        </Sheet>
      </SheetArea>
    </Window>
  );
}
